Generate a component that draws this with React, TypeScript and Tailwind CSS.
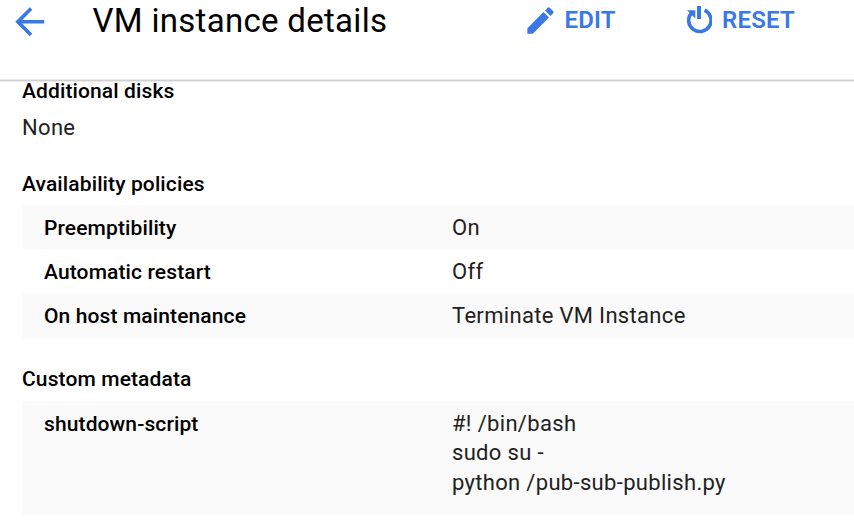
import type { ReactNode } from "react";

function Row({ label, shaded, children }: { label: string; shaded?: boolean; children: ReactNode }) {
  return (
    <div className={`flex h-[44.3px] pl-[22px] pt-[7.5px] ${shaded ? "bg-[#fafafa]" : ""}`}>
      <dt className="w-[408px] text-[21px] font-[550] leading-[30px] tracking-[0.12px] text-black">{label}</dt>
      <dd className="text-[22px] leading-[30px] tracking-[0.32px]">{children}</dd>
    </div>
  );
}

const headingClass = "text-[21px] leading-[30px] font-[550] tracking-[0.12px] text-black";

export default function App() {
  return (
    <div className="h-[520px] w-[854px] overflow-hidden bg-white text-[#212121] font-['Roboto',sans-serif]">
      <header className="flex h-[82px] items-start border-b border-[#ebebeb] pl-2 shadow-[inset_0_-1px_0_#d0d0d0,inset_0_-2px_0_#ebebeb]">
        <button className="shrink-0 text-[#3b78e7]" aria-label="Back">
          <svg viewBox="0 0 24 24" className="size-[43.5px]" fill="currentColor">
            <path d="M20 11H7.83l5.59-5.59L12 4l-8 8 8 8 1.41-1.41L7.83 13H20v-2z" />
          </svg>
        </button>
        <h1 className="ml-[41px] w-[430px] shrink-0 pt-px text-[33px] leading-[40px] tracking-[0.3px] text-black">VM instance details</h1>
        <button className="flex w-[163px] shrink-0 items-start text-[#3b78e7]">
          <svg viewBox="0 0 24 24" className="mt-[3px] size-[35px]" fill="currentColor">
            <path d="M3 17.25V21h3.75L17.81 9.94l-3.75-3.75L3 17.25zM20.71 7.04a1 1 0 0 0 0-1.41l-2.34-2.34a1 1 0 0 0-1.41 0l-1.83 1.83 3.75 3.75 1.83-1.83z" />
          </svg>
          <span className="ml-[7px] mt-px text-[24px] font-semibold leading-[38px] tracking-[0.2px]">EDIT</span>
        </button>
        <button className="flex shrink-0 items-start text-[#3b78e7]">
          <svg viewBox="0 0 26 28" className="ml-[0.5px] mt-[5.5px] h-[28px] w-[26px]" fill="none">
            <path d="M18.6 4.2A11.2 11.2 0 1 1 5.2 7.2" stroke="currentColor" strokeWidth="3.6" />
            <path d="M11 0h4v13h-4zM1 4.3h8.3v8.3z" fill="currentColor" />
          </svg>
          <span className="ml-[10px] mt-px text-[24px] font-semibold leading-[38px] tracking-[0.2px]">RESET</span>
        </button>
      </header>
      <main className="pl-[22px]">
        <section className="h-[93px]">
          <h2 className={`${headingClass} -mt-[6px]`}>Additional disks</h2>
          <p className="mt-[7px] text-[22px] leading-[30px] tracking-[0.32px]">None</p>
        </section>
        <section>
          <h2 className={`${headingClass} h-[36px]`}>Availability policies</h2>
          <dl>
            <Row label="Preemptibility" shaded>On</Row>
            <Row label="Automatic restart">Off</Row>
            <Row label="On host maintenance" shaded>Terminate VM Instance</Row>
          </dl>
        </section>
        <section className="mt-[26.5px]">
          <h2 className={`${headingClass} h-[36.6px]`}>Custom metadata</h2>
          <dl className="flex h-[114.5px] bg-[#fafafa] pl-[22px] pt-[8px]">
            <dt className="w-[408px] text-[21px] font-[550] leading-[30px] tracking-[0.12px] text-black">shutdown-script</dt>
            <dd className="text-[22px] leading-[29.5px] tracking-[0.32px]">
              <p>#! /bin/bash</p>
              <p>sudo su -</p>
              <p>python /pub-sub-publish.py</p>
            </dd>
          </dl>
        </section>
      </main>
    </div>
  );
}
